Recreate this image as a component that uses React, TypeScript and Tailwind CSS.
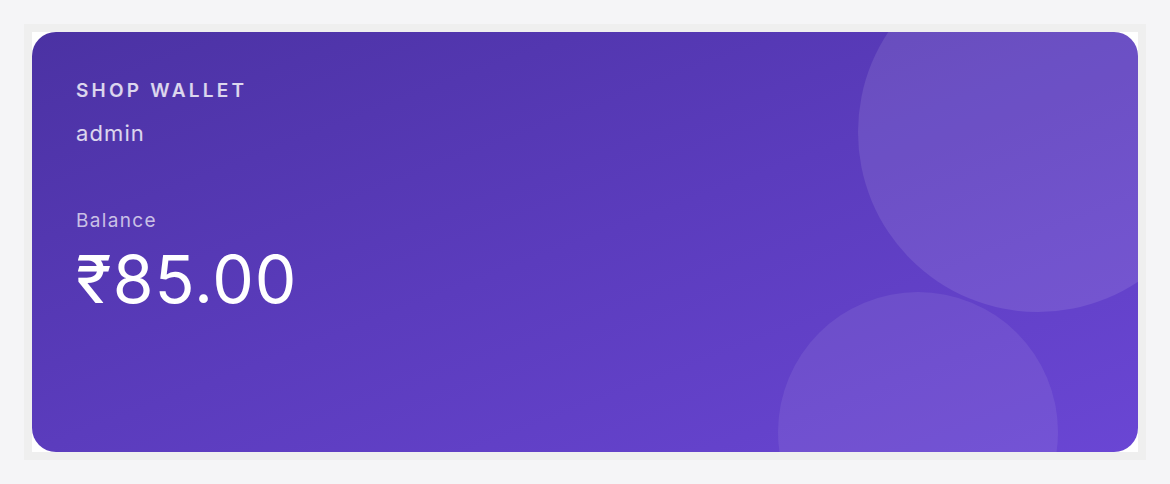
export default function App() {
  return (
    <div className="min-h-screen bg-[#f5f5f7] p-6" style={{ fontFamily: 'Inter, "Noto Sans", sans-serif' }}>
      <div className="bg-[#efefef] p-2">
        <div className="bg-white">
          {/* Wallet card */}
          <div className="relative h-[420px] overflow-hidden rounded-[24px] bg-gradient-to-br from-[#4b32a3] via-[#5b3cbd] to-[#6a46d4] p-[44px]">
            <div className="absolute -top-20 -right-20 h-[360px] w-[360px] rounded-full bg-white/10" />
            <div className="absolute right-20 -bottom-[120px] h-[280px] w-[280px] rounded-full bg-white/[0.08]" />

            <div className="relative">
              <p className="mt-px text-[19px] leading-[28px] font-semibold uppercase tracking-[0.17em] text-white/80">Shop Wallet</p>
              <p className="mt-3 text-[22px] leading-[32px] tracking-[0.05em] text-white/80">admin</p>

              <p className="mt-[58px] text-[19px] leading-[28px] tracking-[0.07em] text-white/70">Balance</p>
              <p className="mt-[11px] text-[66px] leading-[66px] tracking-[0.015em] text-white">₹85.00</p>
            </div>
          </div>
        </div>
      </div>
    </div>
  )
}
